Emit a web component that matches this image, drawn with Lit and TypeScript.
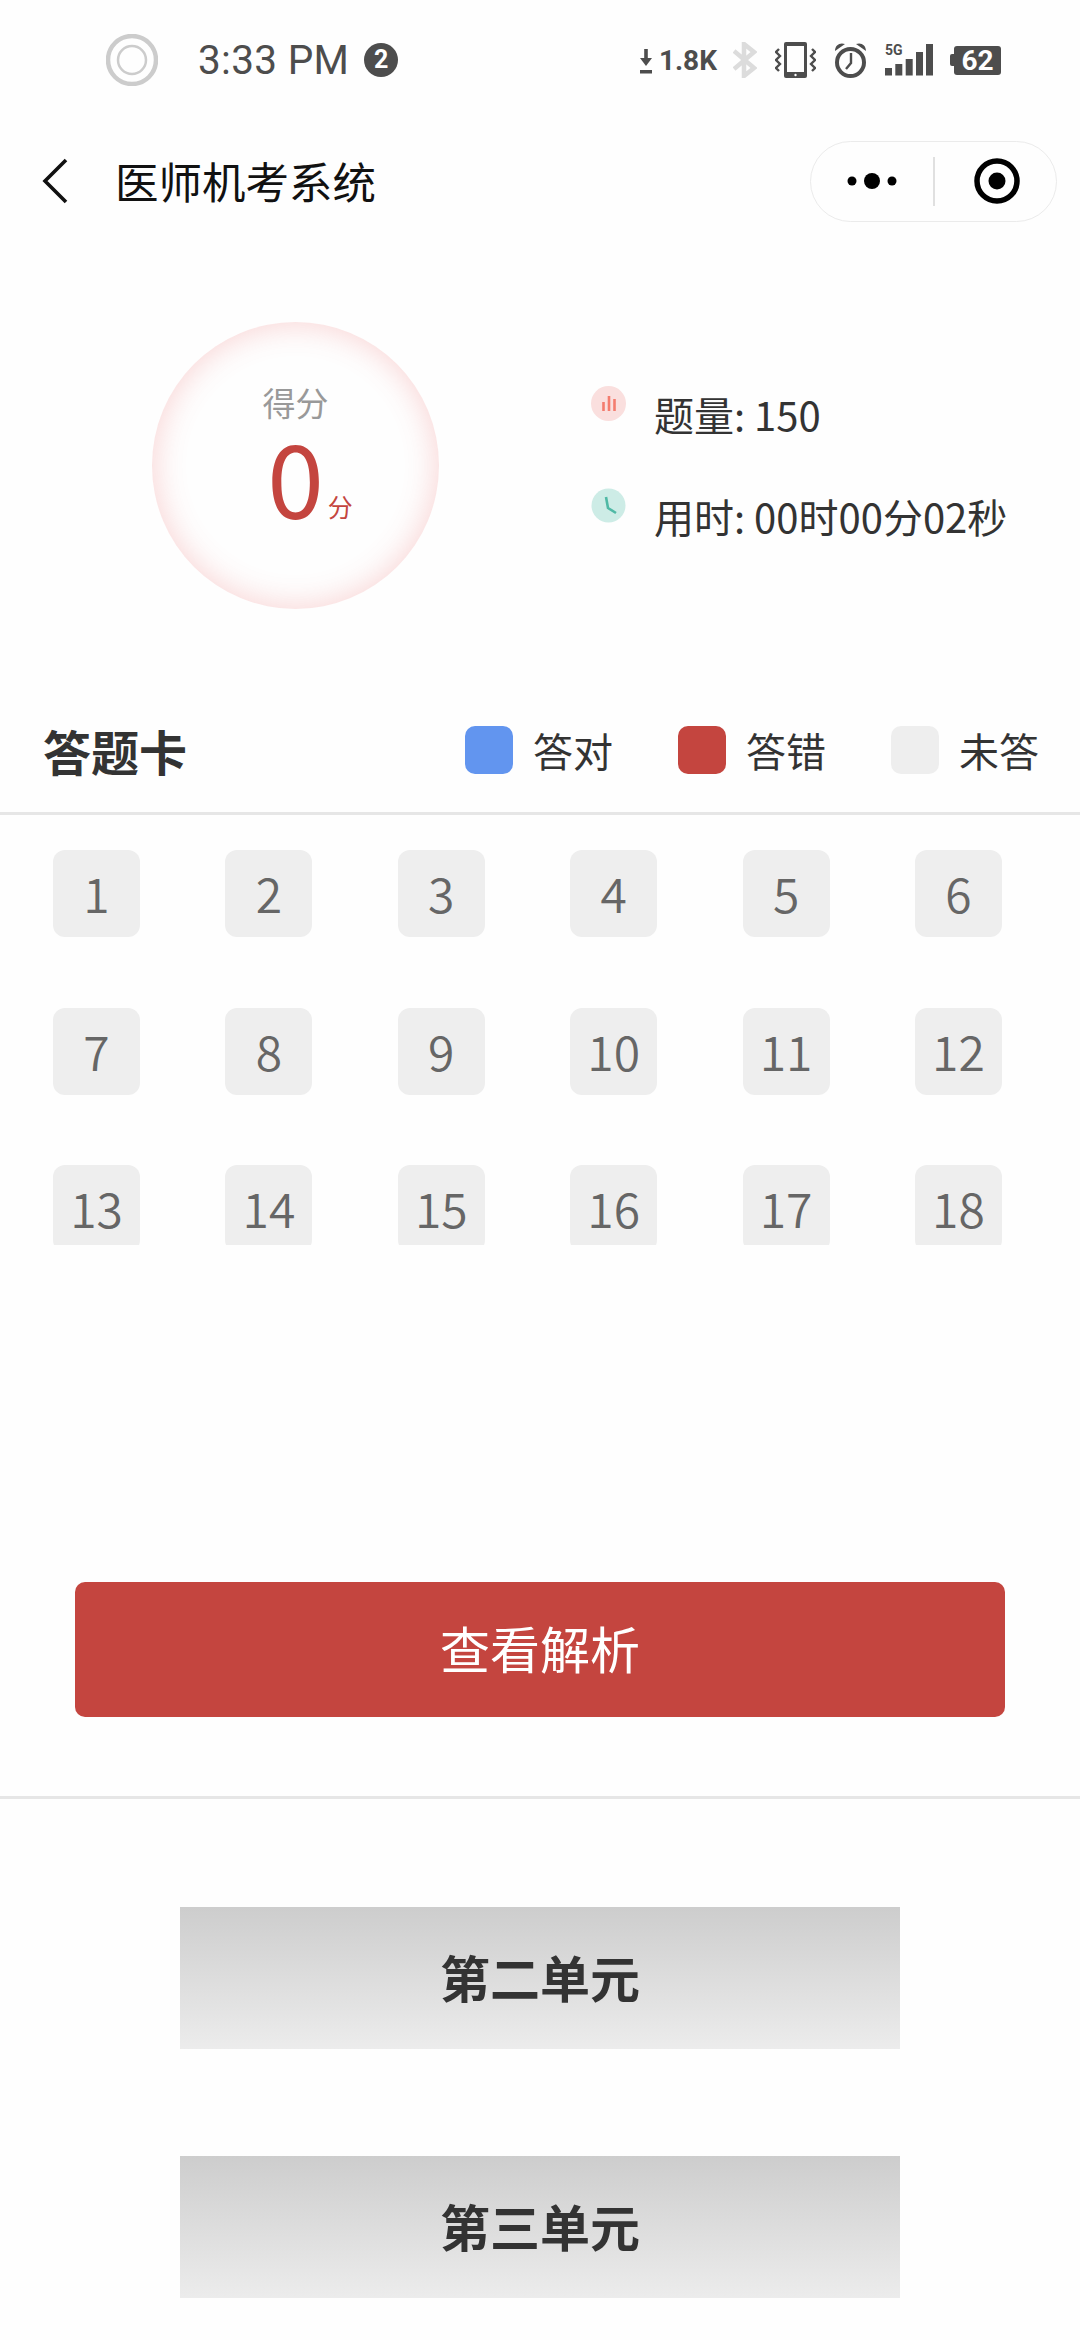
import { LitElement, html, css } from "lit";
import { customElement } from "lit/decorators.js";

const cells = Array.from({ length: 18 }, (_, i) => i + 1);

@customElement("app-root")
export class AppRoot extends LitElement {
  static styles = css`
    :host {
      display: block;
      width: 1080px;
      height: 2340px;
      overflow: hidden;
      background: #fefefe;
      font-family: "Noto Sans CJK SC", "Noto Sans", sans-serif;
      color: #333;
    }
    svg { display: block; flex: none; }

    .status {
      height: 120px;
      display: flex;
      align-items: center;
      padding: 0 79px 0 106px;
      color: #4d4d4d;
      font-family: Roboto, "Liberation Sans", sans-serif;
    }
    .time { font-size: 40.5px; margin-left: 40px; line-height: 44px; font-weight: 400; letter-spacing: 0.3px; }
    .badge {
      width: 34px; height: 34px; border-radius: 50%;
      background: #4d4d4d; color: #fff;
      font-size: 25px; font-weight: 700; line-height: 34px; text-align: center;
      margin-left: 15px;
    }
    .right { margin-left: auto; display: flex; align-items: center; }
    .arrow { margin-top: 4px; }
    .speed { font-size: 28px; font-weight: 700; margin-left: 7px; line-height: 30px; margin-top: 2px; }
    .bt { margin-left: 16px; }
    .vib { margin-left: 18px; }
    .alarm { margin-left: 18px; }
    .signal { margin-left: 18px; position: relative; width: 48px; height: 32px; }
    .fiveg {
      position: absolute; left: 0; top: -2px;
      font-size: 14px; font-weight: 700; line-height: 16px;
    }
    .bars { position: absolute; left: 0; top: 0; }
    .battery { margin-left: 17px; display: flex; align-items: center; }
    .nub { width: 4px; height: 12px; background: #4d4d4d; border-radius: 2px 0 0 2px; }
    .cell-body {
      width: 47px; height: 29px; border-radius: 3px;
      background: #4d4d4d; color: #fff;
      font-size: 28px; font-weight: 700; line-height: 29px; text-align: center;
    }

    .nav {
      height: 122px;
      display: flex;
      align-items: center;
      padding: 0 23px 0 42px;
    }
    .title { font-size: 43.5px; line-height: 56px; color: #111; margin-left: 47px; }
    .capsule {
      margin-left: auto;
      width: 247px; height: 81px;
      box-sizing: border-box;
      border: 1.5px solid #ebebeb;
      border-radius: 41px;
      display: flex;
      align-items: center;
    }
    .cap-left { width: 122px; display: flex; justify-content: center; }
    .cap-sep { width: 1.5px; height: 49px; background: #e0e0e0; }
    .cap-right { flex: 1; display: flex; justify-content: center; padding-left: 4px; }

    .score {
      height: 448px;
      box-sizing: border-box;
      display: flex;
      align-items: flex-start;
      padding: 80px 0 0 152px;
    }
    .ring {
      width: 287px; height: 287px; border-radius: 50%;
      box-shadow: inset 0 0 30px 3px rgba(232, 84, 84, 0.23);
      display: flex; flex-direction: column; align-items: center;
      box-sizing: border-box;
      padding-top: 58px;
    }
    .ring-label { font-size: 33px; line-height: 44px; color: #999; }
    .ring-value {
      display: flex; align-items: baseline;
      color: #c4453f;
      padding-left: 25px;
      margin-top: 1px;
    }
    .ring-num { font-size: 102px; line-height: 100px; }
    .ring-unit { font-size: 25px; line-height: 24px; width: 25px; position: relative; top: -2px; margin-left: 4px; margin-right: -4px; }

    .stats {
      margin-left: 152px;
      padding-top: 64px;
      display: flex; flex-direction: column; gap: 42px;
    }
    .stat { display: flex; align-items: flex-start; gap: 28px; height: 60px; }
    .stat-text { font-size: 40px; line-height: 56px; margin-top: 0; color: #333; white-space: nowrap; }

    .head {
      height: 122px;
      box-sizing: border-box;
      display: flex;
      padding: 36px 41px 0 43px;
      align-items: flex-start;
    }
    .head-title { font-size: 48px; font-weight: 700; line-height: 48px; }
    .legend { margin-left: auto; display: flex; gap: 65px; }
    .leg { display: flex; align-items: center; gap: 20px; height: 48px; font-size: 40px; color: #333; }
    .sw { width: 48px; height: 48px; border-radius: 10px; }
    .blue { background: #6295ef; }
    .red { background: #c4453f; }
    .grey { background: #eeeeee; }

    .rule { height: 3px; background: #e6e6e6; }

    .grid {
      height: 395px;
      padding: 35px 0 0 53px;
      overflow: hidden;
      display: grid;
      grid-template-columns: repeat(6, 87px);
      grid-auto-rows: 87px;
      column-gap: 85.4px;
      row-gap: 70.5px;
    }
    .cell {
      background: #eeeeee;
      border-radius: 12px;
      color: #666;
      font-size: 48px;
      font-weight: 350;
      line-height: 85px;
      text-align: center;
    }

    .action {
      margin: 337px 75px 0;
      height: 135px;
      border-radius: 10px;
      background: #c4453f;
      color: #fff;
      font-size: 50px;
      line-height: 131px;
      text-align: center;
    }
    .rule2 { margin-top: 79px; }
    .units {
      padding: 108px 180px 0;
      display: flex; flex-direction: column; gap: 107px;
    }
    .unit {
      height: 142px;
      background: linear-gradient(180deg, #cdcdcd, #ececec);
      font-size: 50px; font-weight: 700; line-height: 138px;
      text-align: center; color: #333;
    }
  `;

  render() {
    return html`
      <div class="status">
        <svg width="52" height="52" viewBox="0 0 52 52" fill="none" stroke="#cccccc">
          <circle cx="26" cy="26" r="24" stroke-width="4.5"></circle>
          <circle cx="26" cy="26" r="14" stroke-width="2.5"></circle>
        </svg>
        <span class="time">3:33 PM</span>
        <span class="badge">2</span>
        <div class="right">
          <svg class="arrow" width="12" height="26" viewBox="0 0 12 26" fill="#4d4d4d">
            <path d="M4.2 0h3.6v9H12l-6 8-6-8h4.2z"></path>
            <rect x="0" y="21" width="12" height="3.5"></rect>
          </svg>
          <span class="speed">1.8K</span>
          <svg class="bt" width="24" height="36" viewBox="0 0 24 36" fill="none" stroke="#dcdcdc" stroke-width="4.5">
            <path d="M1 9 L21 26 L11 34 V2 L21 10 L1 27"></path>
          </svg>
          <svg class="vib" width="41" height="37" viewBox="0 0 41 37" fill="none">
            <rect x="9" y="0" width="23" height="36" rx="2" fill="#4d4d4d"></rect>
            <rect x="12" y="4" width="17" height="26" fill="#fefefe"></rect>
            <circle cx="20.5" cy="33" r="1.2" fill="#fefefe"></circle>
            <path d="M4 7l-3 3 4 4-4 4 4 4-4 4 3 3M37 7l3 3-4 4 4 4-4 4 4 4-3 3" stroke="#4d4d4d" stroke-width="2.4"></path>
          </svg>
          <svg class="alarm" width="33" height="35" viewBox="0 0 33 35" fill="none" stroke="#4d4d4d">
            <circle cx="16.5" cy="19.5" r="13.5" stroke-width="4"></circle>
            <path d="M17 10v10l-5 6" stroke-width="2.4"></path>
            <path d="M1 8C1 2 6 -1 11 1zM32 8C32 2 27 -1 22 1z" fill="#4d4d4d" stroke="none"></path>
          </svg>
          <div class="signal">
            <span class="fiveg">5G</span>
            <svg class="bars" width="48" height="32" viewBox="0 0 48 32" fill="#4d4d4d">
              <rect x="0" y="24" width="7" height="7.5"></rect>
              <rect x="10.3" y="20" width="7" height="11.5"></rect>
              <rect x="20.7" y="15" width="7" height="16.5"></rect>
              <rect x="31" y="8" width="7" height="23.5"></rect>
              <rect x="41" y="0" width="7" height="31.5"></rect>
            </svg>
          </div>
          <div class="battery">
            <span class="nub"></span>
            <span class="cell-body">62</span>
          </div>
        </div>
      </div>

      <div class="nav">
        <svg width="26" height="46" viewBox="0 0 26 46" fill="none" stroke="#111" stroke-width="3.6">
          <path d="M24 2 L3 23 L24 44"></path>
        </svg>
        <span class="title">医师机考系统</span>
        <div class="capsule">
          <div class="cap-left">
            <svg width="50" height="16" viewBox="0 0 50 16" fill="#000">
              <circle cx="5" cy="8" r="4.5"></circle>
              <circle cx="25" cy="8" r="8"></circle>
              <circle cx="45" cy="8" r="4.5"></circle>
            </svg>
          </div>
          <div class="cap-sep"></div>
          <div class="cap-right">
            <svg width="46" height="46" viewBox="0 0 46 46">
              <circle cx="23" cy="23" r="20" fill="none" stroke="#000" stroke-width="5.5"></circle>
              <circle cx="23" cy="23" r="8.5" fill="#000"></circle>
            </svg>
          </div>
        </div>
      </div>

      <div class="score">
        <div class="ring">
          <span class="ring-label">得分</span>
          <div class="ring-value">
            <span class="ring-num">0</span>
            <span class="ring-unit">分</span>
          </div>
        </div>
        <div class="stats">
          <div class="stat">
            <svg width="35" height="35" viewBox="0 0 35 35">
              <circle cx="17.5" cy="17.5" r="17.5" fill="#fadfde"></circle>
              <path d="M12.5 16v9M18 10v15M23.5 13v12" stroke="#f47c6e" stroke-width="2.6" fill="none"></path>
            </svg>
            <span class="stat-text">题量: 150</span>
          </div>
          <div class="stat">
            <svg width="35" height="35" viewBox="0 0 35 35">
              <circle cx="17.5" cy="17.5" r="17" fill="#cdece6"></circle>
              <path d="M15 9 L17 20 L25 25" stroke="#4fb9a5" stroke-width="2.6" fill="none"></path>
            </svg>
            <span class="stat-text">用时: 00时00分02秒</span>
          </div>
        </div>
      </div>

      <div class="head">
        <span class="head-title">答题卡</span>
        <div class="legend">
          <div class="leg"><span class="sw blue"></span>答对</div>
          <div class="leg"><span class="sw red"></span>答错</div>
          <div class="leg"><span class="sw grey"></span>未答</div>
        </div>
      </div>
      <div class="rule"></div>

      <div class="grid">
        ${cells.map((n) => html`<div class="cell">${n}</div>`)}
      </div>

      <div class="action">查看解析</div>
      <div class="rule rule2"></div>

      <div class="units">
        <div class="unit">第二单元</div>
        <div class="unit">第三单元</div>
      </div>
    `;
  }
}
